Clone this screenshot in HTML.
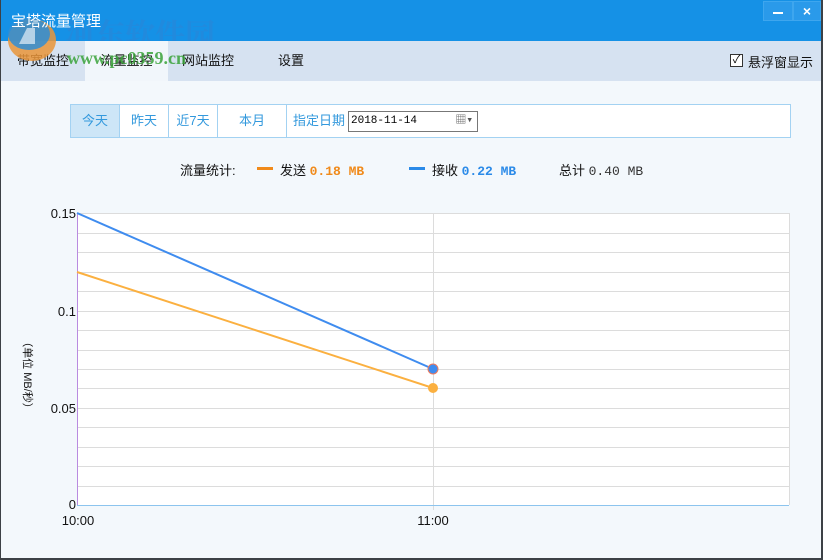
<!DOCTYPE html>
<html><head><meta charset="utf-8"><style>
*{margin:0;padding:0;box-sizing:border-box}
body{width:823px;height:560px;overflow:hidden;background:#3c4146;font-family:"Liberation Sans","Noto Sans CJK SC",sans-serif;font-size:13px;position:relative}
.win{position:absolute;left:1px;top:0;width:820px;height:558px;background:#f3f8fc}
.title{position:absolute;left:0;top:0;width:820px;height:41px;background:#1591e6;color:#fff;font-size:15px}
.tabs{position:absolute;left:0;top:41px;width:820px;height:40px;background:#d6e2f1}
.tab{position:absolute;top:0;height:40px;line-height:40px;text-align:center;color:#111;font-size:13px}
.a{position:absolute}
.btns{position:absolute;left:69px;top:104px;width:721px;height:34px;border:1px solid #a3d2f2;background:#fff}
.b{position:absolute;top:0;height:32px;line-height:32px;text-align:center;color:#3399dd;border-right:1px solid #a3d2f2}
.mono{font-family:"Liberation Mono","Noto Sans CJK SC",monospace}
</style></head><body>
<div class="win">
<div class="title">
<div class="a" style="left:762px;top:1px;width:30px;height:20px;background:#2a9aea;border:1px solid #3ea6ee"></div>
<div class="a" style="left:772px;top:12px;width:10px;height:2px;background:#fff"></div>
<div class="a" style="left:792px;top:1px;width:28px;height:20px;background:#2a9aea;border:1px solid #3ea6ee;color:#fff;font-weight:bold;text-align:center;line-height:18px;font-size:14px">×</div>
<div class="a" style="left:64px;top:10px;font-size:30px;font-weight:bold;color:#2a86d8;opacity:.6;font-family:'Noto Serif CJK SC',serif">河东软件园</div>
</div>
<div class="tabs">
<div class="tab" style="left:84px;width:83px;background:#f1f6fb">流量监控</div>
<div class="tab" style="left:0;width:84px">带宽监控</div>
<div class="tab" style="left:167px;width:80px">网站监控</div>
<div class="tab" style="left:260px;width:60px">设置</div>
<div class="a" style="left:729px;top:13px;width:13px;height:13px;border:1px solid #333;background:#fff;font-size:11px;line-height:11px;text-align:center">✓</div>
<div class="a" style="left:747px;top:11px;color:#111">悬浮窗显示</div>
</div>
<svg class="a" style="left:4px;top:14px" width="60" height="50"><ellipse cx="27" cy="26" rx="24" ry="21" fill="#e9953a" opacity=".85"/><ellipse cx="24" cy="20" rx="21" ry="16" fill="#2f8ed6" opacity=".85"/><path d="M14 30 L22 14 L30 14 L30 30 Z" fill="#fff" opacity=".6"/></svg>
<div class="a" style="left:10px;top:10px;color:#fff;font-size:15px">宝塔流量管理</div>
<div class="a" style="left:66px;top:48px;color:#3aa33a;font-weight:bold;font-size:18px;font-family:'Liberation Serif',serif;opacity:.85">www.pc0359.cn</div>
<div class="btns">
<div class="b" style="left:0;width:49px;background:#cde6f7">今天</div>
<div class="b" style="left:49px;width:49px">昨天</div>
<div class="b" style="left:98px;width:49px">近7天</div>
<div class="b" style="left:147px;width:69px">本月</div>
<div class="a" style="left:222px;top:0;line-height:32px;color:#3399dd">指定日期</div>
<div class="a mono" style="left:277px;top:6px;width:130px;height:21px;border:1px solid #777;font-size:11px;line-height:19px;padding-left:2px;color:#000">2018-11-14<span style="position:absolute;right:4px;top:0;color:#555">▦▾</span></div>
</div>
<div class="a" style="left:179px;top:160px;color:#111">流量统计:</div>
<div class="a" style="left:256px;top:167px;width:16px;height:3px;background:#f08a1a"></div>
<div class="a" style="left:279px;top:160px;color:#111">发送 <span class="mono" style="color:#f08a1a;font-weight:bold">0.18 MB</span></div>
<div class="a" style="left:408px;top:167px;width:16px;height:3px;background:#2a8ae8"></div>
<div class="a" style="left:431px;top:160px;color:#111">接收 <span class="mono" style="color:#2a8ae8;font-weight:bold">0.22 MB</span></div>
<div class="a" style="left:558px;top:160px;color:#111">总计 <span class="mono" style="color:#333">0.40 MB</span></div>
<svg class="a" style="left:-1px;top:0" width="823" height="560">
<rect x="77" y="213" width="712" height="292" fill="#fff"/>
<g stroke="#dcdcdc" stroke-width="1">
<line x1="77" x2="789" y1="213.5" y2="213.5"/><line x1="77" x2="789" y1="233.5" y2="233.5"/><line x1="77" x2="789" y1="252.5" y2="252.5"/><line x1="77" x2="789" y1="272.5" y2="272.5"/><line x1="77" x2="789" y1="291.5" y2="291.5"/><line x1="77" x2="789" y1="311.5" y2="311.5"/><line x1="77" x2="789" y1="330.5" y2="330.5"/><line x1="77" x2="789" y1="350.5" y2="350.5"/><line x1="77" x2="789" y1="369.5" y2="369.5"/><line x1="77" x2="789" y1="388.5" y2="388.5"/><line x1="77" x2="789" y1="408.5" y2="408.5"/><line x1="77" x2="789" y1="427.5" y2="427.5"/><line x1="77" x2="789" y1="447.5" y2="447.5"/><line x1="77" x2="789" y1="466.5" y2="466.5"/><line x1="77" x2="789" y1="486.5" y2="486.5"/>
<line x1="433.5" x2="433.5" y1="213" y2="510"/><line x1="789.5" x2="789.5" y1="213" y2="505"/>
</g>
<line x1="77.5" x2="77.5" y1="213" y2="505" stroke="#b98be0"/>
<line x1="77" x2="789" y1="505.5" y2="505.5" stroke="#8cc4ee"/>
<polyline points="77,272 433,388" stroke="#fbb040" stroke-width="2" fill="none"/>
<polyline points="77,213 433,369" stroke="#3f8cef" stroke-width="2" fill="none"/>
<circle cx="433" cy="388" r="5" fill="#fbb040"/>
<circle cx="433" cy="369" r="5" fill="#3f8cef" stroke="#f07a5a" stroke-width="1"/>
<g font-family="Liberation Sans,sans-serif" font-size="13" fill="#111" text-anchor="end">
<text x="76" y="218">0.15</text><text x="76" y="316">0.1</text><text x="76" y="413">0.05</text><text x="76" y="509">0</text>
</g>
<g font-family="Liberation Sans,sans-serif" font-size="13" fill="#111" text-anchor="middle">
<text x="78" y="525">10:00</text><text x="433" y="525">11:00</text>
</g>
<text transform="translate(24,375) rotate(90)" font-family="Liberation Sans,Noto Sans CJK SC,sans-serif" font-size="11" fill="#111" text-anchor="middle">（单位 MB/秒）</text>
</svg>
</div>
</body></html>
